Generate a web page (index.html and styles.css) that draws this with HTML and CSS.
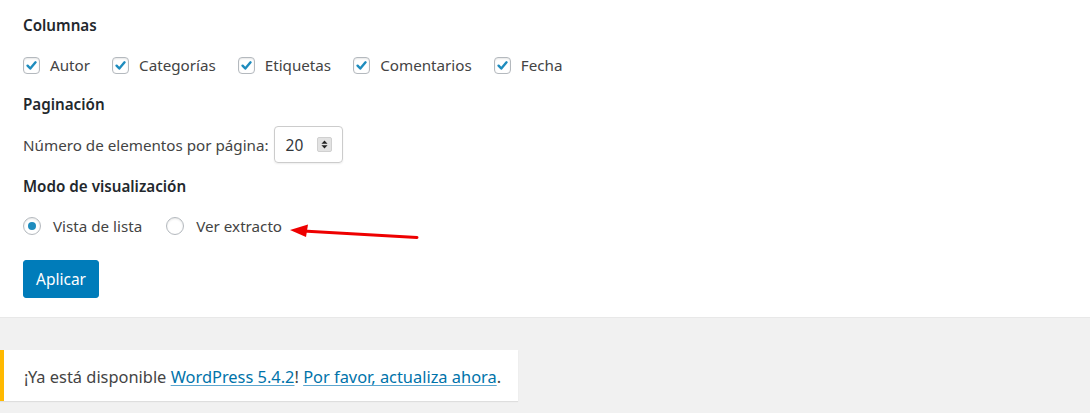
FILE: index.html
```html
<!DOCTYPE html>
<html lang="es">
<head>
<meta charset="utf-8">
<title>Opciones de pantalla</title>
<link rel="stylesheet" href="styles.css">
</head>
<body>
<div class="panel">
  <div class="legend">Columnas</div>
  <div class="row checks">
    <label class="opt"><span class="cb"><svg viewBox="0 0 16 16"><path d="M3.8 8.2 L6.7 11.2 L12.3 4.6" /></svg></span>Autor</label>
    <label class="opt"><span class="cb"><svg viewBox="0 0 16 16"><path d="M3.8 8.2 L6.7 11.2 L12.3 4.6" /></svg></span>Categorías</label>
    <label class="opt"><span class="cb"><svg viewBox="0 0 16 16"><path d="M3.8 8.2 L6.7 11.2 L12.3 4.6" /></svg></span>Etiquetas</label>
    <label class="opt"><span class="cb"><svg viewBox="0 0 16 16"><path d="M3.8 8.2 L6.7 11.2 L12.3 4.6" /></svg></span>Comentarios</label>
    <label class="opt"><span class="cb"><svg viewBox="0 0 16 16"><path d="M3.8 8.2 L6.7 11.2 L12.3 4.6" /></svg></span>Fecha</label>
  </div>
  <div class="legend l2">Paginación</div>
  <div class="row perpage">
    <span class="plabel">Número de elementos por página:</span>
    <span class="num"><span class="val">20</span><span class="spin"><svg viewBox="0 0 15 15"><path d="M4 6.5 L7.5 3 L11 6.5 Z"/><path d="M4 8.5 L11 8.5 L7.5 12 Z"/></svg></span></span>
  </div>
  <div class="legend l3">Modo de visualización</div>
  <div class="row radios">
    <label class="opt ropt"><span class="rb on"></span>Vista de lista</label>
    <label class="opt ropt"><span class="rb"></span>Ver extracto</label>
  </div>
  <div class="actions"><button class="btn">Aplicar</button></div>
  <svg class="arrow" viewBox="0 0 140 20" width="140" height="20">
    <path d="M128 13.5 L14 7" stroke="#ee0000" stroke-width="3" stroke-linecap="round" fill="none"/>
    <path d="M1 6 L19 0.5 L17 13 Z" fill="#ee0000"/>
  </svg>
</div>
<div class="gray">
  <div class="notice">¡Ya está disponible <a href="#">WordPress 5.4.2</a>! <a href="#">Por favor, actualiza ahora</a>.</div>
</div>
</body>
</html>
```
FILE: styles.css
```css
html, body {
  margin: 0;
  padding: 0;
  background: #f1f1f1;
}
body {
  font-family: "Noto Sans", "Open Sans", sans-serif;
  font-size: 15.2px;
  color: #444;
  width: 1090px;
  height: 413px;
  overflow: hidden;
}
.panel {
  position: relative;
  background: #fff;
  height: 318px;
  border-bottom: 1px solid #e8e8e8;
  padding: 15px 23px 0;
  box-sizing: border-box;
}
.legend {
  font-weight: 600;
  color: #23282d;
  line-height: 20px;
  height: 20px;
}
.row {
  display: flex;
  align-items: center;
}
.checks {
  margin-top: 20px;
  height: 20px;
  gap: 22px;
}
.opt {
  display: flex;
  align-items: center;
  line-height: 20px;
  color: #444;
}
.cb {
  width: 17px;
  height: 17px;
  border: 1px solid #b4b9be;
  border-radius: 4px;
  box-sizing: border-box;
  margin-right: 10px;
  box-shadow: inset 0 1px 2px rgba(0,0,0,.1);
  display: inline-flex;
  align-items: center;
  justify-content: center;
}
.cb svg {
  width: 15px;
  height: 15px;
}
.cb path {
  fill: none;
  stroke: #1e8cbe;
  stroke-width: 2.6;
  stroke-linecap: round;
  stroke-linejoin: round;
}
.l2 { margin-top: 19px; }
.perpage {
  margin-top: 12px;
  height: 37px;
}
.plabel { margin-right: 5px; }
.num {
  width: 69px;
  height: 37px;
  border: 1px solid #ccc;
  border-radius: 4px;
  box-sizing: border-box;
  display: flex;
  align-items: center;
  padding-left: 11px;
  box-shadow: 0 1px 2px rgba(0,0,0,.07);
}
.val {
  font-size: 15.5px;
  color: #32373c;
  width: 31px;
}
.spin {
  width: 15px;
  height: 15px;
  background: #e2e2e2;
  border: 1px solid #d0d0d0;
  box-sizing: border-box;
  border-radius: 2px;
  display: inline-flex;
}
.spin svg { width: 13px; height: 13px; }
.spin path { fill: #222; }
.l3 { margin-top: 13px; }
.radios {
  margin-top: 20px;
  height: 20px;
  gap: 24px;
}
.rb {
  width: 18px;
  height: 18px;
  border: 1px solid #b4b9be;
  border-radius: 50%;
  box-sizing: border-box;
  margin-right: 12px;
  box-shadow: inset 0 1px 2px rgba(0,0,0,.1);
  display: inline-flex;
  align-items: center;
  justify-content: center;
}
.rb.on::after {
  content: "";
  width: 8px;
  height: 8px;
  border-radius: 50%;
  background: #1e8cbe;
}
.actions { margin-top: 24px; }
.btn {
  font-family: inherit;
  font-size: 15.5px;
  background: #007cba;
  color: #fff;
  border: 1px solid #007cba;
  border-radius: 3px;
  width: 76px;
  height: 38px;
  padding: 0;
  cursor: pointer;
}
.arrow {
  position: absolute;
  left: 289px;
  top: 224px;
}
.gray {
  padding-top: 32px;
}
.notice {
  width: 518px;
  height: 51px;
  box-sizing: border-box;
  background: #fff;
  border-left: 4px solid #ffb900;
  box-shadow: 0 1px 1px rgba(0,0,0,.08);
  padding-left: 20px;
  font-size: 16.4px;
  line-height: 53px;
  color: #444;
  white-space: nowrap;
}
.notice a {
  color: #0073aa;
  text-decoration: underline;
  text-decoration-color: #5ba6cf;
  text-underline-offset: 2px;
}
```
